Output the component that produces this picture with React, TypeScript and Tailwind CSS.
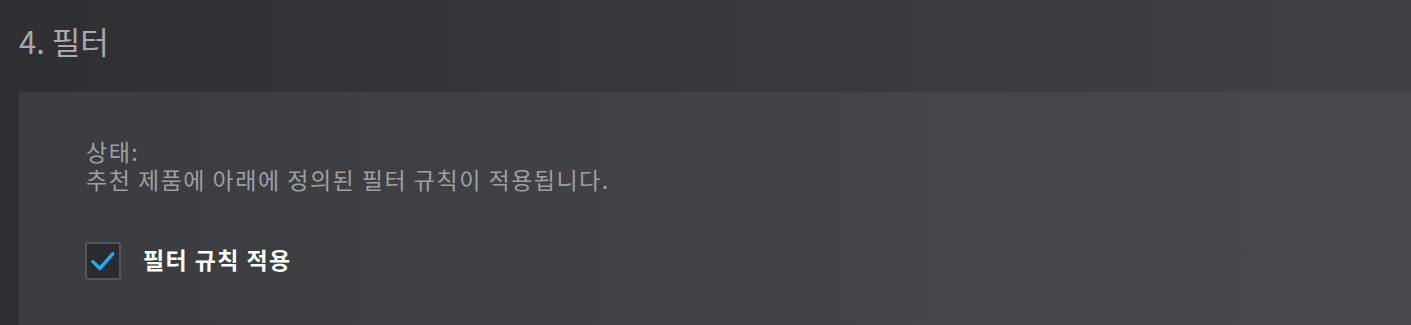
export default function App() {
  const ko = { fontFamily: '"Noto Sans CJK KR", "Noto Sans", sans-serif' };

  return (
    <div
      className="h-[325px] w-[1411px] overflow-hidden bg-linear-to-r from-[#2e2f33] via-[#37383c] to-[#404145] pl-[19px]"
      style={ko}
    >
      <h1 className="pt-[22px] text-[31px] leading-[38px] font-normal text-[#a9aaac]">4. 필터</h1>

      <section className="mt-[32px] h-[300px] bg-linear-to-r from-[#3b3c40] to-[#48494c] pt-[45px] pl-[67px]">
        <p className="text-[23px] leading-[28px] tracking-[1.5px] text-[#9e9fa1]">
          상태:
          <br />
          추천 제품에 아래에 정의된 필터 규칙이 적용됩니다.
        </p>

        <label className="mt-[49px] flex items-center gap-[22px]">
          <span className="-ml-px flex h-[38px] w-[36px] items-center justify-center rounded-[3px] border-2 border-[#555659] bg-[#2a2b2e]">
            <svg viewBox="0 0 24 24" className="h-[30px] w-[30px]" fill="none">
              <path
                d="M4 12.5 L9.5 18 L19.8 6.3"
                stroke="#2aa7f2"
                strokeWidth="2.8"
                strokeLinecap="round"
                strokeLinejoin="round"
              />
            </svg>
          </span>
          <span className="-mt-[4px] text-[23px] leading-[30px] font-semibold tracking-[1.4px] text-white">
            필터 규칙 적용
          </span>
        </label>
      </section>
    </div>
  );
}
